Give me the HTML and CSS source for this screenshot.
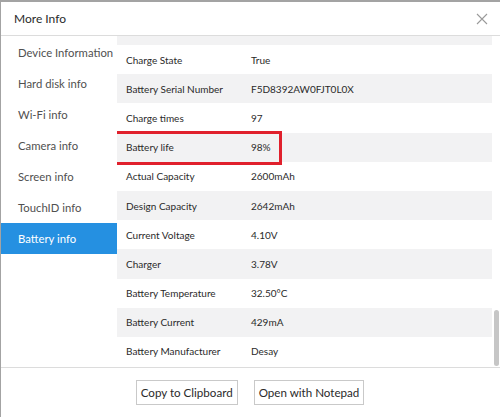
FILE: index.html
```html
<!DOCTYPE html>
<html>
<head>
<meta charset="utf-8">
<link rel="stylesheet" href="styles.css">
</head>
<body>
<div class="window">
  <header class="titlebar">
    <span class="title">More Info</span>
    <svg class="close" width="12" height="12" viewBox="0 0 12 12"><path d="M1 1L11 11M11 1L1 11" stroke="#9a9a9a" stroke-width="1.1" fill="none"/></svg>
  </header>
  <div class="main">
    <nav class="sidebar">
      <div class="nav-item">Device Information</div>
      <div class="nav-item">Hard disk info</div>
      <div class="nav-item">Wi-Fi info</div>
      <div class="nav-item">Camera info</div>
      <div class="nav-item">Screen info</div>
      <div class="nav-item">TouchID info</div>
      <div class="nav-item active">Battery info</div>
    </nav>
    <section class="content">
      <div class="rows">
        <div class="row partial"></div>
        <div class="row"><span class="label">Charge State</span><span class="value">True</span></div>
        <div class="row alt"><span class="label">Battery Serial Number</span><span class="value">F5D8392AW0FJT0L0X</span></div>
        <div class="row"><span class="label">Charge times</span><span class="value">97</span></div>
        <div class="row alt"><span class="label">Battery life</span><span class="value">98%</span></div>
        <div class="row"><span class="label">Actual Capacity</span><span class="value">2600mAh</span></div>
        <div class="row alt"><span class="label">Design Capacity</span><span class="value">2642mAh</span></div>
        <div class="row"><span class="label">Current Voltage</span><span class="value">4.10V</span></div>
        <div class="row alt"><span class="label">Charger</span><span class="value">3.78V</span></div>
        <div class="row"><span class="label">Battery Temperature</span><span class="value">32.50°C</span></div>
        <div class="row alt"><span class="label">Battery Current</span><span class="value">429mA</span></div>
        <div class="row"><span class="label">Battery Manufacturer</span><span class="value">Desay</span></div>
      </div>
      <div class="scrollbar"><div class="thumb"></div></div>
      <div class="highlight"></div>
    </section>
  </div>
  <footer class="footer">
    <button class="btn">Copy to Clipboard</button>
    <button class="btn">Open with Notepad</button>
  </footer>
</div>
</body>
</html>
```
FILE: styles.css
```css
html, body {
  margin: 0;
  padding: 0;
  background: #ffffff;
}
body {
  width: 500px;
  height: 417px;
  overflow: hidden;
  font-family: Lato, "Noto Sans", sans-serif;
  color: #333333;
}
.window {
  box-sizing: border-box;
  width: 500px;
  height: 417px;
  border-top: 2px solid #a3a3a3;
  border-left: 1px solid #a3a3a3;
  display: flex;
  flex-direction: column;
  background: #fff;
}
.titlebar {
  height: 33px;
  border-bottom: 1px solid #dcdcdc;
  display: flex;
  align-items: center;
  justify-content: space-between;
  padding: 0 12px 0 13px;
}
.title {
  font-size: 12px;
  color: #2a2a2a;
}
.close {
  display: block;
  margin-top: 1px;
}
.main {
  display: flex;
  height: 331px;
  border-bottom: 1px solid #dcdcdc;
}
.sidebar {
  width: 116px;
  display: flex;
  flex-direction: column;
  padding-top: 1px;
}
.nav-item {
  height: 31px;
  line-height: 31px;
  padding-left: 17px;
  font-size: 11.3px;
  color: #505050;
  white-space: nowrap;
}
.nav-item.active {
  background: #2590e1;
  color: #fff;
}
.content {
  position: relative;
  flex: 1;
  display: flex;
  overflow: hidden;
}
.rows {
  width: 375px;
  display: flex;
  flex-direction: column;
}
.row {
  height: 29.2px;
  display: flex;
  align-items: center;
  font-size: 10px;
  color: #2a2a2a;
  flex-shrink: 0;
}
.row.partial {
  height: 9px;
  background: #f2f2f3;
}
.row.alt {
  background: #f2f2f3;
}
.label {
  width: 125px;
  padding-left: 9px;
  white-space: nowrap;
}
.value {
  white-space: nowrap;
}
.scrollbar {
  flex: 1;
  display: flex;
  flex-direction: column;
  justify-content: flex-end;
  align-items: center;
  padding-bottom: 1px;
}
.thumb {
  width: 5px;
  height: 56px;
  border-radius: 3px;
  background: #c6c6c6;
}
.highlight {
  position: absolute;
  left: -5px;
  top: 95px;
  width: 164px;
  height: 28px;
  border: 3px solid #e0202c;
}
.footer {
  flex: 1;
  display: flex;
  justify-content: center;
  align-items: flex-start;
  gap: 16px;
  padding-top: 12px;
  padding-right: 1px;
}
.btn {
  font-family: Lato, "Noto Sans", sans-serif;
  font-size: 11.6px;
  color: #2a2a2a;
  background: #fff;
  border: 1px solid #c9c9c9;
  height: 25px;
  padding: 0 4px;
  border-radius: 0;
}
```
